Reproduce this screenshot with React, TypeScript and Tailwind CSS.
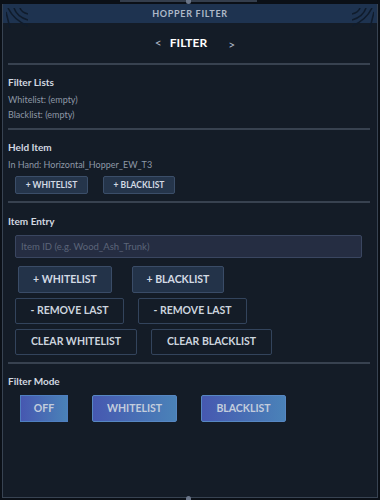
import React from "react";

const font = { fontFamily: "Lato, 'Noto Sans', sans-serif" };

function Corner({ flip }: { flip?: boolean }) {
  return (
    <svg
      width="22"
      height="20"
      viewBox="0 0 22 20"
      className={flip ? "absolute right-[3px] top-[4px] -scale-x-100" : "absolute left-[3px] top-[4px]"}
      fill="none"
      stroke="#101c2c"
      strokeWidth="1.6"
    >
      <path d="M2 0 C6 8 12 14 22 18" />
      <path d="M8 0 C10 6 15 10 22 12" />
      <path d="M14 0 C15 3 18 5 22 6" />
      <path d="M0 4 L4 20" />
    </svg>
  );
}

function Divider() {
  return <div className="h-[2px] bg-[#384250]" />;
}

function Heading({ children, className = "" }: { children: React.ReactNode; className?: string }) {
  return <div className={`text-[10px] leading-[12px] font-bold text-[#d2d8e0] ${className}`}>{children}</div>;
}

export default function App() {
  return (
    <div className="relative w-[380px] h-[500px] bg-[#0b1017] pt-[4px] px-[2px] pb-[2px]" style={font}>
      {/* top tab */}
      <div className="absolute left-[120px] top-0 h-[2px] w-[137px] bg-[#343e4d]" />
      <div className="absolute left-[186px] top-0 h-[4px] w-[5px] rounded-b-full bg-[#6b7689]" />
      <div className="absolute left-[186px] bottom-0 h-[4px] w-[5px] rounded-t-full bg-[#6b7689]" />

      <div className="flex h-full flex-col border-x border-b border-[#384352] bg-[#141c27]">
        <div className="relative flex h-[19px] items-center justify-center bg-[#1e3350]">
          <Corner />
          <Corner flip />
          <span className="text-[9px] font-bold tracking-[0.7px] text-[#aeb9c8]">HOPPER FILTER</span>
        </div>

        <div className="flex flex-1 flex-col pl-[5px] pr-[7px]">
          <div className="flex h-[40px] items-center justify-center pl-[12px]">
            <span className="text-[12px] text-[#aeb8c6]">&lt;</span>
            <span className="ml-[8px] text-[12px] font-bold text-white">FILTER</span>
            <span className="ml-[21px] mt-[3px] text-[12px] text-[#aeb8c6]">&gt;</span>
          </div>
          <Divider />

          <Heading className="mt-[11px]">Filter Lists</Heading>
          <div className="mt-[4px] text-[9px] leading-[15px] text-[#8e98a6]">Whitelist: (empty)</div>
          <div className="text-[9px] leading-[15px] text-[#8e98a6]">Blacklist: (empty)</div>
          <div className="mt-[6px]">
            <Divider />
          </div>

          <Heading className="mt-[11px]">Held Item</Heading>
          <div className="mt-[4px] text-[9px] leading-[15px] text-[#8e98a6]">In Hand: Horizontal_Hopper_EW_T3</div>
          <div className="mt-[4px] ml-[7px] flex gap-[15px]">
            <button className="h-[18px] w-[73px] rounded-[2px] border border-[#3b4e69] bg-[#25354b] text-[8.5px] font-bold text-[#d3dae4]">
              + WHITELIST
            </button>
            <button className="h-[18px] w-[72px] rounded-[2px] border border-[#3b4e69] bg-[#25354b] text-[8.5px] font-bold text-[#d3dae4]">
              + BLACKLIST
            </button>
          </div>
          <div className="mt-[7px]">
            <Divider />
          </div>

          <Heading className="mt-[12px]">Item Entry</Heading>
          <input
            className="mt-[8px] ml-[7px] h-[23px] w-[347px] rounded-[2px] border border-[#3a4660] bg-[#252d42] px-[5px] text-[9.5px] text-[#5c6579] outline-none placeholder:text-[#5c6579]"
            placeholder="Item ID (e.g. Wood_Ash_Trunk)"
            style={font}
          />
          <div className="mt-[8px] ml-[10px] flex gap-[20px]">
            <button className="h-[27px] w-[94px] rounded-[2px] border border-[#3a4c67] bg-[#233349] text-[10.5px] font-bold text-[#d3dae4]">
              + WHITELIST
            </button>
            <button className="h-[27px] w-[92px] rounded-[2px] border border-[#3a4c67] bg-[#233349] text-[10.5px] font-bold text-[#d3dae4]">
              + BLACKLIST
            </button>
          </div>
          <div className="mt-[5px] ml-[7px] flex gap-[14px]">
            <button className="h-[26px] w-[109px] rounded-[2px] border border-[#33445c] text-[10.5px] font-bold text-[#ccd4de]">
              - REMOVE LAST
            </button>
            <button className="h-[26px] w-[109px] rounded-[2px] border border-[#33445c] text-[10.5px] font-bold text-[#ccd4de]">
              - REMOVE LAST
            </button>
          </div>
          <div className="mt-[5px] ml-[7px] flex gap-[14px]">
            <button className="h-[26px] w-[122px] rounded-[2px] border border-[#33445c] text-[10.5px] font-bold text-[#ccd4de]">
              CLEAR WHITELIST
            </button>
            <button className="h-[26px] w-[121px] rounded-[2px] border border-[#33445c] text-[10.5px] font-bold text-[#ccd4de]">
              CLEAR BLACKLIST
            </button>
          </div>
          <div className="mt-[7px]">
            <Divider />
          </div>

          <Heading className="mt-[11px]">Filter Mode</Heading>
          <div className="mt-[8px] ml-[12px] flex gap-[24px]">
            <button className="h-[27px] w-[48px] border border-[#4f7fc0] bg-gradient-to-r from-[#4657b0] to-[#4a82b8] text-[10.5px] font-bold text-[#c3cddd]">
              OFF
            </button>
            <button className="h-[27px] w-[85px] rounded-[2px] border border-[#5787c2] bg-gradient-to-r from-[#4658b0] to-[#4a82b8] text-[10.5px] font-bold text-[#c3cddd]">
              WHITELIST
            </button>
            <button className="h-[27px] w-[85px] rounded-[2px] border border-[#5787c2] bg-gradient-to-r from-[#4658b0] to-[#4a82b8] text-[10.5px] font-bold text-[#c3cddd]">
              BLACKLIST
            </button>
          </div>
        </div>
      </div>
    </div>
  );
}
